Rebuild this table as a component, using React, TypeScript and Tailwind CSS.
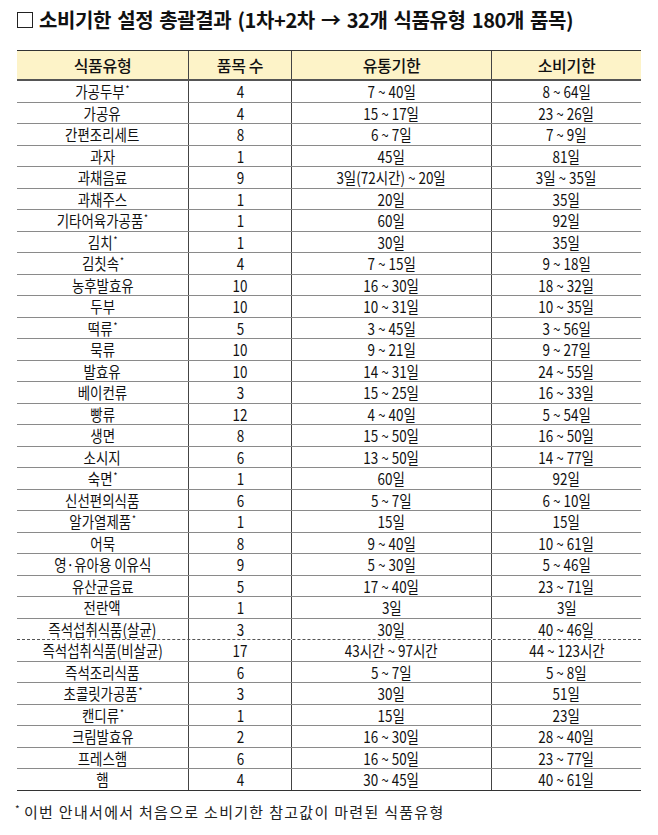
import React from 'react';

type Row = { name: string; star?: boolean; count: string; shelf: string; use: string; dashed?: boolean };

const rows: Row[] = [
  { name: '가공두부', star: true, count: '4', shelf: '7 ~ 40일', use: '8 ~ 64일' },
  { name: '가공유', count: '4', shelf: '15 ~ 17일', use: '23 ~ 26일' },
  { name: '간편조리세트', count: '8', shelf: '6 ~ 7일', use: '7 ~ 9일' },
  { name: '과자', count: '1', shelf: '45일', use: '81일' },
  { name: '과채음료', count: '9', shelf: '3일(72시간) ~ 20일', use: '3일 ~ 35일' },
  { name: '과채주스', count: '1', shelf: '20일', use: '35일' },
  { name: '기타어육가공품', star: true, count: '1', shelf: '60일', use: '92일' },
  { name: '김치', star: true, count: '1', shelf: '30일', use: '35일' },
  { name: '김칫속', star: true, count: '4', shelf: '7 ~ 15일', use: '9 ~ 18일' },
  { name: '농후발효유', count: '10', shelf: '16 ~ 30일', use: '18 ~ 32일' },
  { name: '두부', count: '10', shelf: '10 ~ 31일', use: '10 ~ 35일' },
  { name: '떡류', star: true, count: '5', shelf: '3 ~ 45일', use: '3 ~ 56일' },
  { name: '묵류', count: '10', shelf: '9 ~ 21일', use: '9 ~ 27일' },
  { name: '발효유', count: '10', shelf: '14 ~ 31일', use: '24 ~ 55일' },
  { name: '베이컨류', count: '3', shelf: '15 ~ 25일', use: '16 ~ 33일' },
  { name: '빵류', count: '12', shelf: '4 ~ 40일', use: '5 ~ 54일' },
  { name: '생면', count: '8', shelf: '15 ~ 50일', use: '16 ~ 50일' },
  { name: '소시지', count: '6', shelf: '13 ~ 50일', use: '14 ~ 77일' },
  { name: '숙면', star: true, count: '1', shelf: '60일', use: '92일' },
  { name: '신선편의식품', count: '6', shelf: '5 ~ 7일', use: '6 ~ 10일' },
  { name: '알가열제품', star: true, count: '1', shelf: '15일', use: '15일' },
  { name: '어묵', count: '8', shelf: '9 ~ 40일', use: '10 ~ 61일' },
  { name: '영·유아용 이유식', count: '9', shelf: '5 ~ 30일', use: '5 ~ 46일' },
  { name: '유산균음료', count: '5', shelf: '17 ~ 40일', use: '23 ~ 71일' },
  { name: '전란액', count: '1', shelf: '3일', use: '3일' },
  { name: '즉석섭취식품(살균)', count: '3', shelf: '30일', use: '40 ~ 46일', dashed: true },
  { name: '즉석섭취식품(비살균)', count: '17', shelf: '43시간 ~ 97시간', use: '44 ~ 123시간' },
  { name: '즉석조리식품', count: '6', shelf: '5 ~ 7일', use: '5 ~ 8일' },
  { name: '초콜릿가공품', star: true, count: '3', shelf: '30일', use: '51일' },
  { name: '캔디류', star: true, count: '1', shelf: '15일', use: '23일' },
  { name: '크림발효유', count: '2', shelf: '16 ~ 30일', use: '28 ~ 40일' },
  { name: '프레스햄', count: '6', shelf: '16 ~ 50일', use: '23 ~ 77일' },
  { name: '햄', count: '4', shelf: '30 ~ 45일', use: '40 ~ 61일' },
];

const font = { fontFamily: '"Noto Sans CJK KR", "Noto Sans", sans-serif' };

const Cell = ({ children, last }: { children: React.ReactNode; last?: boolean }) => (
  <div className={`flex h-full items-center justify-center ${last ? '' : 'border-r border-[#444]'}`}>
    <span className="inline-block scale-x-[0.84] whitespace-nowrap text-[16px] leading-[18px] text-[#111]">{children}</span>
  </div>
);

export default function App() {
  return (
    <div className="h-[835px] w-[658px] bg-white pt-[6px]" style={font}>
      <h1 className="ml-[17px] flex items-center text-[20px] font-bold leading-[27px] tracking-[-0.4px] text-[#111] [word-spacing:2px]">
        <span className="mr-[6px] inline-block h-[16px] w-[16px] shrink-0 border-[1.5px] border-[#222]"></span>
        소비기한 설정 총괄결과 (1차+2차 → 32개 식품유형 180개 품목)
      </h1>

      <div className="ml-[17px] mt-[17px] w-[624px]">
        <div className="grid h-[31px] grid-cols-[172px_103px_200px_149px] border-t border-b-2 border-t-[#333] border-b-[#555] bg-[#fdf3c8]">
          {['식품유형', '품목 수', '유통기한', '소비기한'].map((h, i) => (
            <div key={h} className={`flex items-center justify-center ${i < 3 ? 'border-r border-[#444]' : ''}`}>
              <span className="text-[16px] font-medium leading-none tracking-[-0.3px] text-[#111]">{h}</span>
            </div>
          ))}
        </div>
        {rows.map((r, i) => (
          <div
            key={r.name}
            className={`grid h-[21.5px] grid-cols-[172px_103px_200px_149px] border-b ${
              i === rows.length - 1
                ? 'border-[#333]'
                : r.dashed
                ? 'border-dashed border-[#555]'
                : 'border-[#8a8a8a]'
            }`}
          >
            <Cell>
              {r.name}
              {r.star && <span className="relative -top-[5px] ml-[1px] text-[10px] leading-none">*</span>}
            </Cell>
            <Cell>{r.count}</Cell>
            <Cell>{r.shelf}</Cell>
            <Cell last>{r.use}</Cell>
          </div>
        ))}
      </div>

      <p className="ml-[15px] mt-[11px] text-[15px] leading-[20px] tracking-[1.3px] text-[#222]">
        <span className="relative -top-[5px] mr-[3px] text-[10px] leading-none">*</span>이번 안내서에서 처음으로 소비기한 참고값이 마련된 식품유형
      </p>
    </div>
  );
}
